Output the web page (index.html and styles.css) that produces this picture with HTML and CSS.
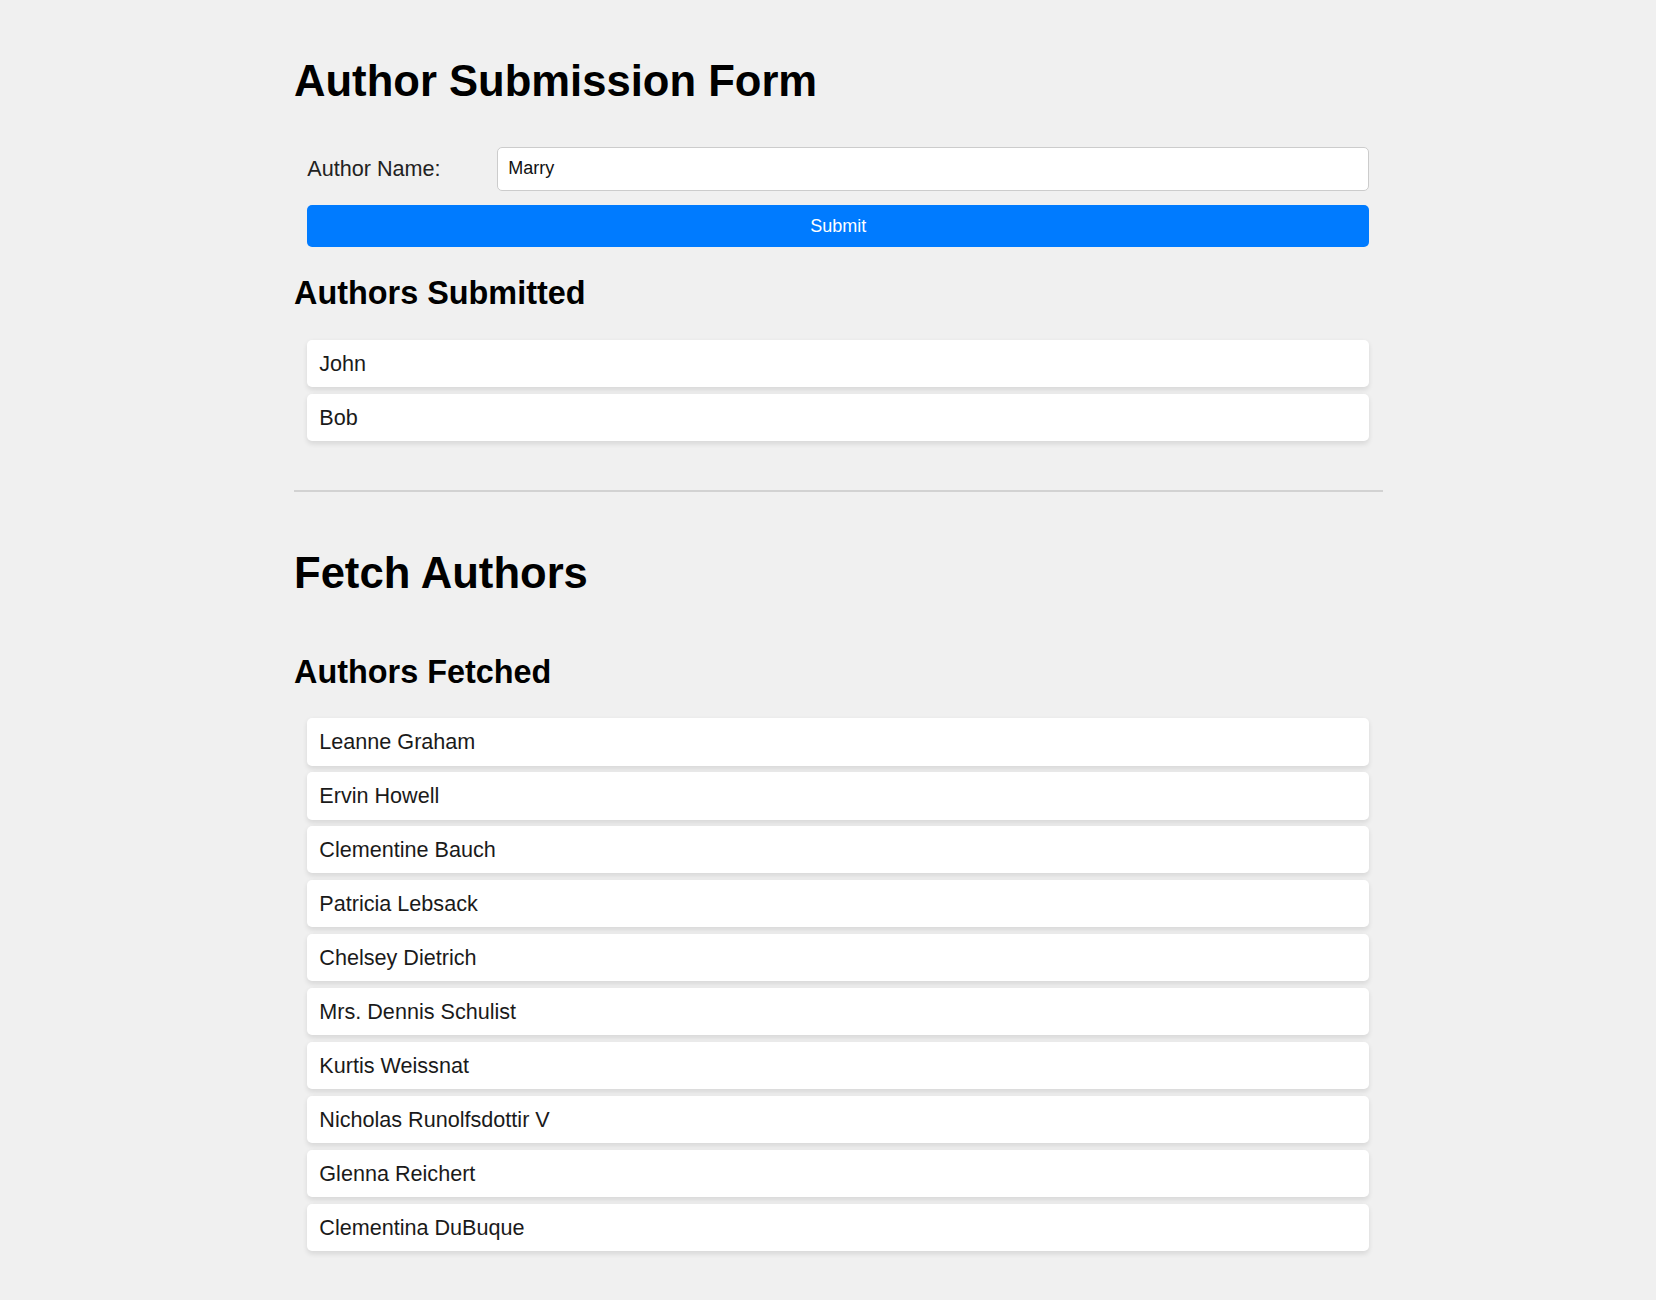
FILE: index.html
```html
<!DOCTYPE html>
<html lang="en">
<head>
<meta charset="utf-8">
<title>Author Submission Form</title>
<link rel="stylesheet" href="styles.css">
</head>
<body>
<div class="page">
  <h1 class="title">Author Submission Form</h1>
  <form class="form">
    <div class="form-row">
      <label class="label" for="author">Author Name:</label>
      <input class="input" id="author" type="text" value="Marry">
    </div>
    <button class="btn" type="button">Submit</button>
  </form>
  <h2 class="subtitle">Authors Submitted</h2>
  <ul class="list">
    <li class="item">John</li>
    <li class="item">Bob</li>
  </ul>
  <hr class="divider">
  <h1 class="title title-fetch">Fetch Authors</h1>
  <h2 class="subtitle subtitle-fetched">Authors Fetched</h2>
  <ul class="list list-fetched">
    <li class="item">Leanne Graham</li>
    <li class="item">Ervin Howell</li>
    <li class="item">Clementine Bauch</li>
    <li class="item">Patricia Lebsack</li>
    <li class="item">Chelsey Dietrich</li>
    <li class="item">Mrs. Dennis Schulist</li>
    <li class="item">Kurtis Weissnat</li>
    <li class="item">Nicholas Runolfsdottir V</li>
    <li class="item">Glenna Reichert</li>
    <li class="item">Clementina DuBuque</li>
  </ul>
</div>
</body>
</html>
```
FILE: styles.css
```css
html, body {
  margin: 0;
  padding: 0;
  background: #f0f0f0;
}

body {
  font-family: "Liberation Sans", Arial, sans-serif;
  color: #111;
}

.page {
  width: 1089px;
  margin-left: 294px;
  padding-top: 56.7px;
  padding-bottom: 40px;
}

.title {
  margin: 0;
  font-size: 43.6px;
  font-weight: bold;
  line-height: 49.6px;
  color: #000;
}

.form {
  margin: 40.8px 0 0;
  padding: 0 14px 0 13.3px;
}

.form-row {
  display: flex;
  align-items: center;
}

.label {
  flex: 0 0 189.4px;
  font-size: 21.6px;
  color: #222;
}

.input {
  flex: 1;
  box-sizing: border-box;
  height: 43.7px;
  padding: 0 10.5px;
  border: 1px solid #ccc;
  border-radius: 5px;
  background: #fff;
  font-family: "Liberation Sans", Arial, sans-serif;
  font-size: 18px;
  color: #111;
  outline: none;
}

.btn {
  display: block;
  width: 100%;
  box-sizing: border-box;
  height: 42.7px;
  margin-top: 14px;
  border: 0;
  border-radius: 5px;
  background: #007bff;
  color: #fff;
  font-family: "Liberation Sans", Arial, sans-serif;
  font-size: 18px;
}

.subtitle {
  margin: 27.4px 0 0;
  font-size: 32.4px;
  font-weight: bold;
  line-height: 37.2px;
  color: #000;
}

.list {
  list-style: none;
  margin: 27.7px 0 0;
  padding: 0 14px 0 13.3px;
}

.list-fetched {
  margin-top: 26.7px;
}

.item {
  background: #fff;
  border-radius: 5px;
  box-shadow: 0 2.5px 5px rgba(0, 0, 0, 0.1);
  padding: 11.15px 12px;
  font-size: 21.6px;
  line-height: 25px;
  color: #1a1a1a;
  margin-bottom: 6.7px;
}

.item:last-child {
  margin-bottom: 0;
}

.divider {
  margin: 49.3px 0 0;
  height: 0;
  border: 0;
  border-top: 2px solid #d2d2d2;
}

.title-fetch {
  margin-top: 56.5px;
}

.subtitle-fetched {
  margin-top: 56px;
}
```
